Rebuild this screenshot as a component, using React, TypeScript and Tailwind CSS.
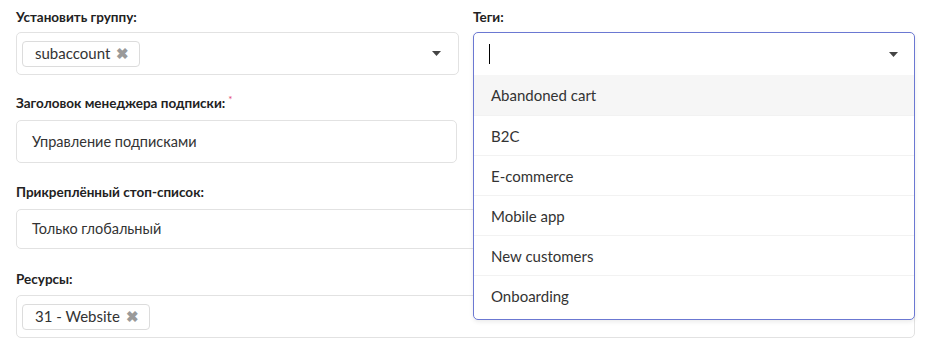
const FONT = "font-['Source_Sans_Pro','Lato',sans-serif]";

const TAGS = ["Abandoned cart", "B2C", "E-commerce", "Mobile app", "New customers", "Onboarding"];

function Caret() {
  return (
    <svg width="9" height="5" viewBox="0 0 9 5" className="shrink-0">
      <path d="M0 0h9L4.5 5z" fill="#444" />
    </svg>
  );
}

function Chip({ label }: { label: string }) {
  return (
    <span className="inline-flex h-[26px] items-center gap-[6px] rounded-[4px] border border-[#dcdcdc] bg-white pl-[12px] pr-[10px] text-[15px] text-[#333]">
      {label}
      <span className="text-[15px] font-bold leading-none text-[#9a9a9a]">✖</span>
    </span>
  );
}

function Label({ children, required }: { children: string; required?: boolean }) {
  return (
    <div className="h-[18px] text-[13.5px] font-bold leading-[18px] text-[#222]">
      {children}
      {required && <sup className="ml-[3px] text-[10px] font-normal text-[#e2466f]">*</sup>}
    </div>
  );
}

export default function App() {
  return (
    <div className={`${FONT} h-[353px] w-[930px] bg-white pt-[8px] pl-[16px] text-[#333]`}>
      <div className="flex">
        <div className="w-[443px]">
          <Label>Установить группу:</Label>
          <div className="mt-[6px] flex h-[43px] items-center justify-between rounded-[5px] border border-[#e2e2e2] pl-[5px] pr-[17px]">
            <Chip label="subaccount" />
            <Caret />
          </div>

          <div className="mt-[19px]">
            <Label required>Заголовок менеджера подписки:</Label>
          </div>
          <div className="mt-[8px] flex h-[43px] w-[441px] items-center rounded-[5px] border border-[#e2e2e2] px-[15px] text-[14.5px]">
            Управление подписками
          </div>
        </div>

        <div className="relative ml-[14px] w-[442px]">
          <Label>Теги:</Label>
          <div className="absolute left-0 right-0 top-[24px] z-10 rounded-[5px] border border-[#6b78d2] bg-white shadow-[0_2px_4px_rgba(0,0,0,0.08)]">
            <div className="flex h-[42px] items-center justify-between pl-[15px] pr-[16px]">
              <span className="h-[20px] w-px bg-black" />
              <Caret />
            </div>
            <ul className="pb-[4px]">
              {TAGS.map((t, i) => (
                <li
                  key={t}
                  className={`flex items-center px-[17px] text-[15px] text-[#333] ${
                    i === 0 ? "h-[40px] bg-[#f6f6f6]" : "h-[40px] border-t border-[#f2f2f2] pt-px"
                  }`}
                >
                  {t}
                </li>
              ))}
            </ul>
          </div>
        </div>
      </div>

      <div className="w-[899px]">
        <div className="mt-[20px]">
          <Label>Прикреплённый стоп-список:</Label>
        </div>
        <div className="mt-[8px] flex h-[40px] items-center rounded-[5px] border border-[#e2e2e2] px-[15px] text-[14.5px]">
          Только глобальный
        </div>

        <div className="mt-[21px]">
          <Label>Ресурсы:</Label>
        </div>
        <div className="mt-[7px] flex h-[43px] items-center rounded-[5px] border border-[#e2e2e2] pl-[5px]">
          <Chip label="31 - Website" />
        </div>
      </div>
    </div>
  );
}
